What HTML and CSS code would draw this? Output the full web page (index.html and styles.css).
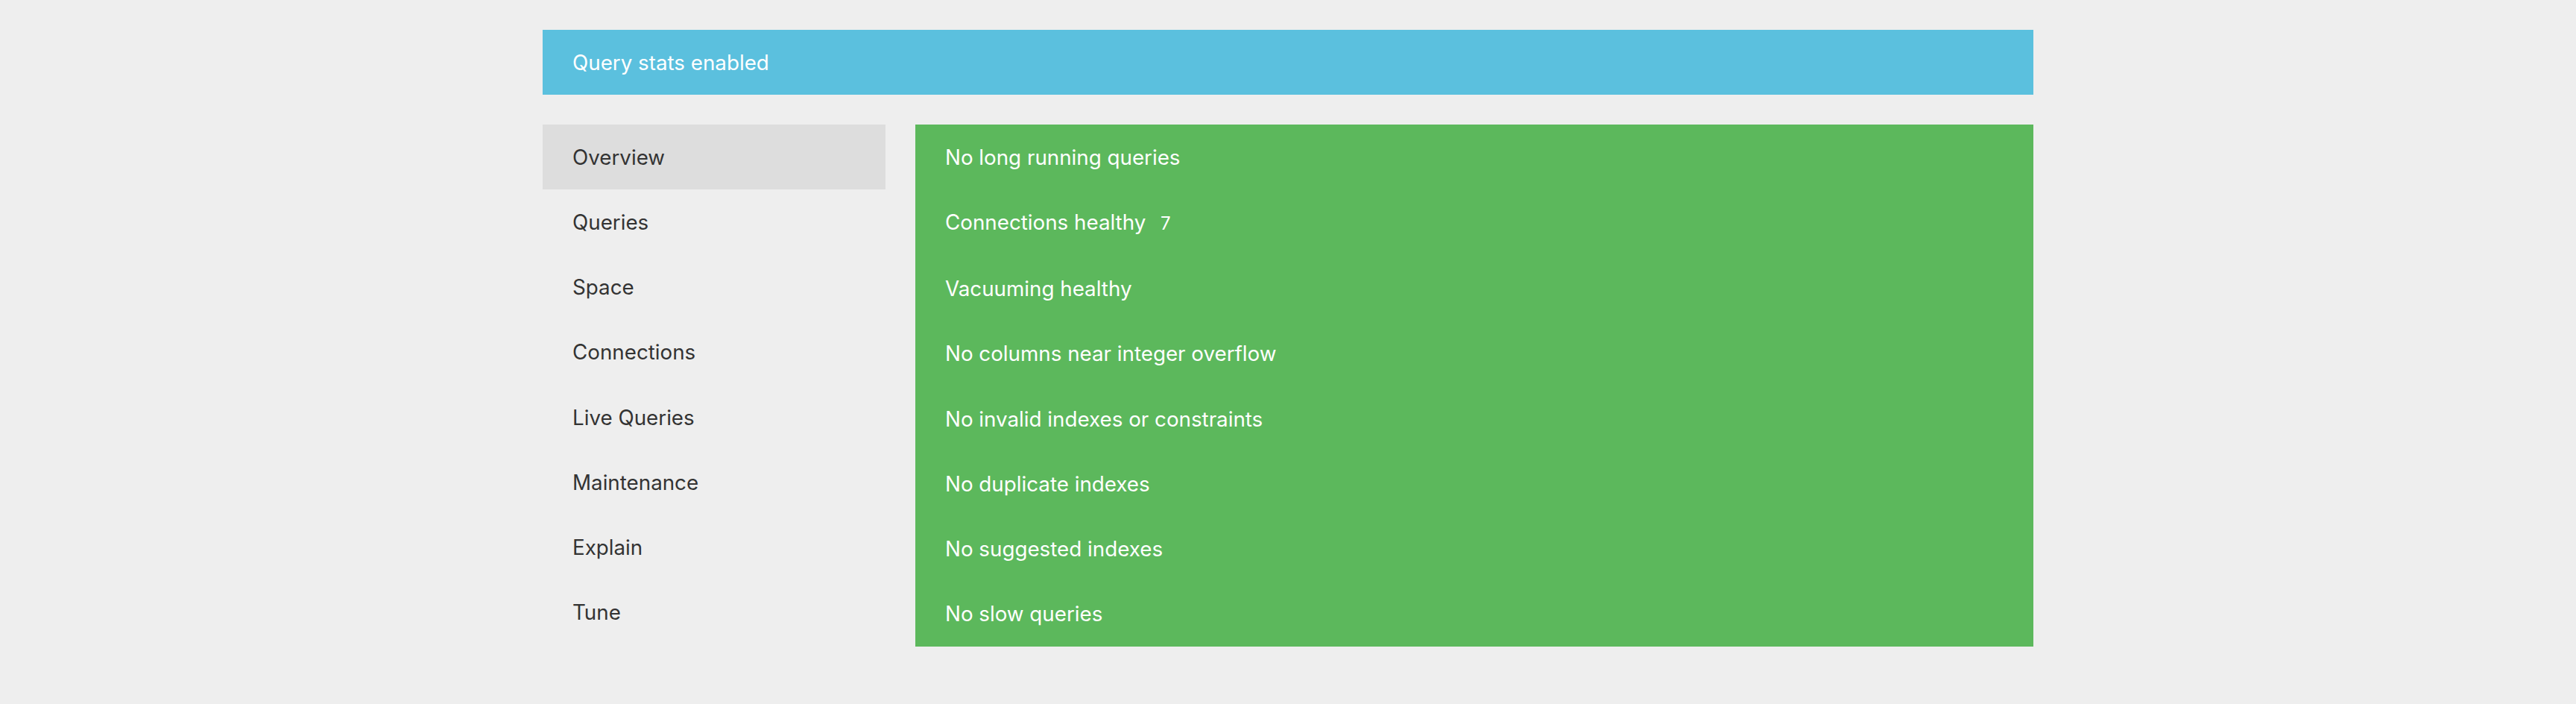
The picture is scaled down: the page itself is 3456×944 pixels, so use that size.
FILE: index.html
```html
<!DOCTYPE html>
<html lang="en">
<head>
<meta charset="utf-8">
<title>PgHero</title>
<link rel="stylesheet" href="styles.css">
</head>
<body>
<div class="container">
  <div class="alert">Query stats enabled</div>
  <div class="layout">
    <nav class="nav">
      <a class="nav-item active">Overview</a>
      <a class="nav-item">Queries</a>
      <a class="nav-item">Space</a>
      <a class="nav-item">Connections</a>
      <a class="nav-item">Live Queries</a>
      <a class="nav-item">Maintenance</a>
      <a class="nav-item">Explain</a>
      <a class="nav-item">Tune</a>
    </nav>
    <div class="checks">
      <div class="check">No long running queries</div>
      <div class="check">Connections healthy <span class="badge">7</span></div>
      <div class="check">Vacuuming healthy</div>
      <div class="check">No columns near integer overflow</div>
      <div class="check">No invalid indexes or constraints</div>
      <div class="check">No duplicate indexes</div>
      <div class="check">No suggested indexes</div>
      <div class="check">No slow queries</div>
    </div>
  </div>
</div>
</body>
</html>
```

FILE: styles.css
```css
html, body {
  margin: 0;
  padding: 0;
  background: #eeeeee;
}

body {
  padding-top: 40px;
  font-family: Inter, "Noto Sans", "Liberation Sans", sans-serif;
  font-size: 27.75px;
  line-height: 40px;
  color: #333333;
}

.container {
  width: 2000px;
  margin: 0 auto;
}

.alert {
  background: #5bc0de;
  color: #ffffff;
  padding: 23.5px 40px;
}

.layout {
  display: flex;
  align-items: flex-start;
  gap: 40px;
  margin-top: 40px;
}

.nav {
  width: 460px;
  flex: none;
  display: flex;
  flex-direction: column;
}

.nav-item {
  display: block;
  padding: 23.625px 40px;
  color: #333333;
  text-decoration: none;
}

.nav-item.active {
  background: #dddddd;
}

.checks {
  flex: 1;
  background: #5cb85c;
  color: #ffffff;
}

.check {
  padding: 23.625px 40px;
}

.badge {
  font-size: 24px;
  padding: 0 12px;
}
```
